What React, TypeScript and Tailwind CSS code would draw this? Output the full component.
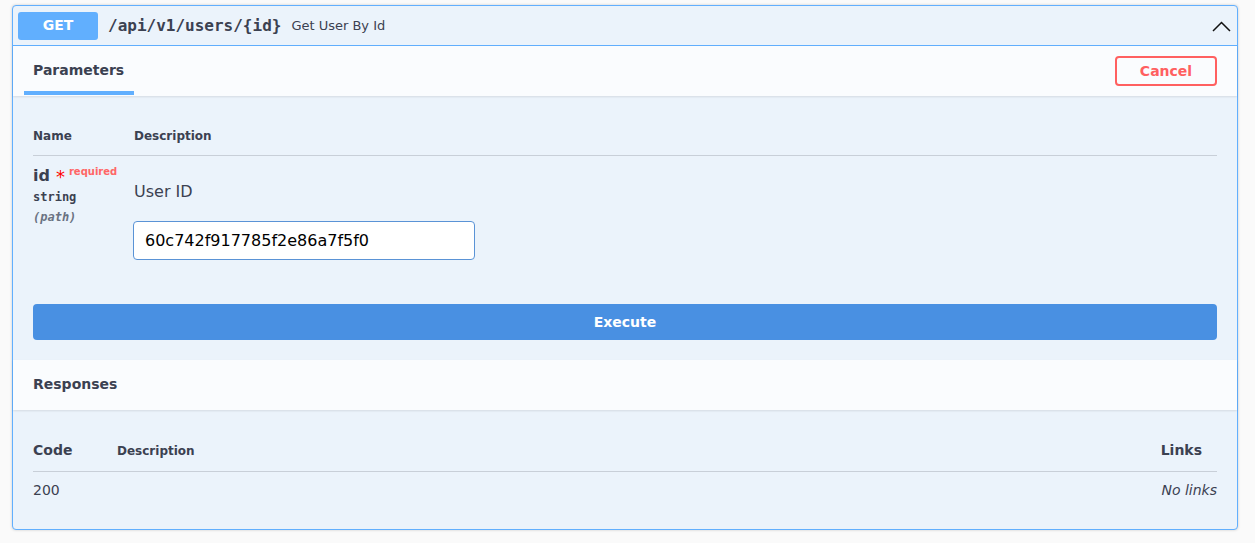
import React from "react";

const sans = { fontFamily: '"DejaVu Sans", sans-serif' } as React.CSSProperties;

export default function App() {
  return (
    <div className="min-h-[543px] bg-[#fafafa] pl-[12px] pr-[17px] pt-[5px]" style={sans}>
      <div className="rounded-[4px] border border-[#61affe] bg-[#ebf3fb] shadow-[0_0_3px_rgba(0,0,0,0.19)] text-[#3b4151] font-['DejaVu_Sans',sans-serif]">
        {/* summary */}
        <div className="flex h-[40px] items-center border-b border-[#61affe] px-[5px]">
          <span className="flex h-[28px] w-[80px] items-center justify-center rounded-[3px] bg-[#61affe] text-[14px] font-bold text-white">
            GET
          </span>
          <span className="ml-[10px] font-['DejaVu_Sans_Mono',monospace] text-[16px] font-bold text-[#3b4151]">
            /api/v1/users/{"{id}"}
          </span>
          <span className="ml-[10px] text-[13px] text-[#3b4151]">Get User By Id</span>
          <span className="ml-auto mr-0 flex items-center">
            <svg width="20" height="20" viewBox="0 0 20 20">
              <polyline points="1,15 9.5,6.5 18,15" fill="none" stroke="#111" strokeWidth="1.5" />
            </svg>
          </span>
        </div>
        {/* tab header */}
        <div className="flex h-[50px] items-start bg-[#fafcfe] px-[11px] shadow-[0_1px_2px_rgba(0,0,0,0.1)]">
          <div className="flex h-[49px] flex-col justify-end">
            <div className="px-[9px] pb-[10px] text-[14px] font-bold">Parameters</div>
            <div className="h-[4px] w-[110px] bg-[#61affe]" />
          </div>
          <button className="ml-auto mr-[9px] mt-[10px] h-[30px] w-[102px] rounded-[4px] border-2 border-[#ff6060] bg-transparent text-[14px] font-bold text-[#ff6060]">
            Cancel
          </button>
        </div>
        {/* parameters */}
        <div className="px-[20px] pt-[21px]">
          <div className="flex h-[39px] items-center border-b border-[#3b4151]/20 text-[12px] font-bold">
            <div className="w-[101px]">Name</div>
            <div>Description</div>
          </div>
          <div className="flex pt-[10px]">
            <div className="w-[100px]">
              <div className="flex items-start">
                <span className="text-[16px] font-bold leading-[20px]">id</span>
                <span className="ml-[6px] text-[18px] leading-[22px] text-[#ff0000]">*</span>
                <span className="ml-[4px] text-[10px] font-bold leading-[12px] text-[#ff6666]">required</span>
              </div>
              <div className="mt-[1px] font-['DejaVu_Sans_Mono',monospace] text-[12px] font-bold leading-[16px]">string</div>
              <div className="mt-[4px] font-['DejaVu_Sans_Mono',monospace] text-[12px] font-bold italic leading-[16px] text-gray-500">(path)</div>
            </div>
            <div>
              <div className="ml-[1px] mt-[16px] text-[16px] leading-[20px]">User ID</div>
              <input
                readOnly
                value="60c742f917785f2e86a7f5f0"
                className="mt-[19px] h-[39px] w-[342px] rounded-[4px] border border-[#5a93d6] bg-white px-[11px] text-[16px] text-black outline-none"
              />
            </div>
          </div>
          <div className="pb-[20px] pt-[44px]">
            <button className="h-[36px] w-full rounded-[4px] bg-[#4990e2] text-[14px] font-bold text-white">Execute</button>
          </div>
        </div>
        {/* responses header */}
        <div className="flex h-[50px] items-center bg-[#fafcfe] px-[20px] pb-[1px] shadow-[0_1px_2px_rgba(0,0,0,0.1)]">
          <span className="text-[14px] font-bold">Responses</span>
        </div>
        <div className="px-[20px] pb-[20px] pt-[20px]">
          <div className="flex h-[42px] items-center border-b border-[#3b4151]/20 font-bold">
            <div className="w-[84px] text-[14px]">Code</div>
            <div className="text-[12px]">Description</div>
            <div className="ml-auto mr-[15px] text-[14px]">Links</div>
          </div>
          <div className="flex h-[37px] items-center text-[14px]">
            <div>200</div>
            <div className="ml-auto italic">No links</div>
          </div>
        </div>
      </div>
    </div>
  );
}
